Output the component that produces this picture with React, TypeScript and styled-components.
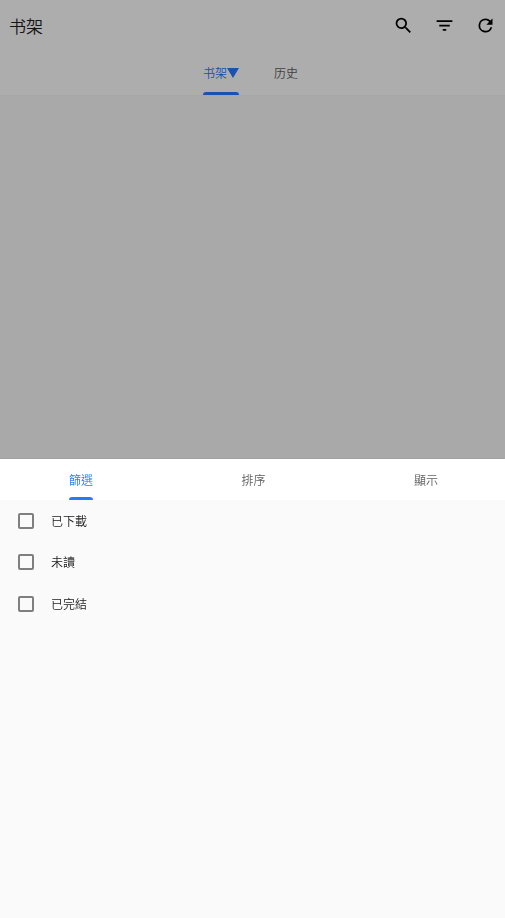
import React, { useState } from "react";
import styled, { createGlobalStyle } from "styled-components";

const GlobalStyle = createGlobalStyle`
  *, *::before, *::after { box-sizing: border-box; }
  body {
    margin: 0;
    background: #fafafa;
    color: #212121;
    font-family: "Noto Sans CJK SC", "Noto Sans CJK TC", sans-serif;
    font-size: 12px;
    font-weight: 350;
    line-height: 20px;
  }
  button, input { font: inherit; }
`;

const Page = styled.div`
  min-height: 100vh;
`;

const TopBar = styled.header`
  background: #ffffff;
  box-shadow: 0 1px 1px rgba(0, 0, 0, 0.02);
`;

const Toolbar = styled.div`
  display: flex;
  align-items: center;
  justify-content: space-between;
  height: 51px;
  padding: 0 9px;
`;

const Title = styled.h1`
  margin: 0;
  font-size: 17px;
  font-weight: inherit;
  line-height: 24px;
`;

const Actions = styled.div`
  display: flex;
  gap: 20px;
`;

const IconButton = styled.button`
  display: flex;
  padding: 0;
  border: 0;
  background: none;
  color: #000000;
`;

const Icon = styled.svg`
  width: 21px;
  height: 21px;
  fill: currentColor;
`;

const PageTabs = styled.nav`
  display: flex;
  justify-content: center;
  gap: 35px;
  height: 44px;
  padding-right: 4px;
`;

const SheetTabs = styled.nav`
  display: flex;
  justify-content: space-between;
  height: 41px;
  padding: 0 67px 0 69px;
  background: #ffffff;
`;

const Tab = styled.button<{ $active?: boolean }>`
  display: flex;
  flex-direction: column;
  padding: 0;
  border: 0;
  background: none;
  color: ${(p) => (p.$active ? "#2979ff" : "#616161")};

  &::after {
    content: "";
    align-self: stretch;
    height: 3px;
    border-radius: 3px 3px 0 0;
    background: ${(p) => (p.$active ? "#2979ff" : "transparent")};
  }
`;

const TabLabel = styled.span`
  display: flex;
  flex: 1;
  align-items: center;
  padding-top: 3px;
`;

const Triangle = styled.svg`
  width: 12px;
  height: 10px;
  fill: currentColor;
`;

const Scrim = styled.div`
  position: fixed;
  inset: 0;
  background: rgba(0, 0, 0, 0.32);
`;

const Sheet = styled.section`
  position: fixed;
  inset: 50% 0 0;
  background: #fafafa;
  font-family: "Noto Sans CJK TC", "Noto Sans CJK SC", sans-serif;
  box-shadow: 0 0 2px rgba(0, 0, 0, 0.15);
`;

const Option = styled.label`
  display: flex;
  align-items: center;
  gap: 17px;
  padding: 0 18px;
`;

const OptionList = styled.div`
  display: grid;
  grid-auto-rows: 1fr;
  height: 125px;
`;

const Checkbox = styled.input`
  appearance: none;
  width: 16px;
  height: 16px;
  margin: 0;
  border: 2px solid #7f7f7f;
  border-radius: 2px;

  &:checked {
    border-color: #2979ff;
    background: #2979ff;
  }
`;

const actions = [
  {
    label: "搜索",
    path: "M15.5 14h-.79l-.28-.27A6.47 6.47 0 0 0 16 9.5 6.5 6.5 0 1 0 9.5 16c1.61 0 3.09-.59 4.23-1.57l.27.28v.79l5 4.99L20.49 19l-4.99-5zm-6 0C7.01 14 5 11.99 5 9.5S7.01 5 9.5 5 14 7.01 14 9.5 11.99 14 9.5 14z",
  },
  { label: "筛选", path: "M10 18h4v-2h-4v2zM3 6v2h18V6H3zm3 7h12v-2H6v2z" },
  {
    label: "刷新",
    path: "M17.65 6.35A7.96 7.96 0 0 0 12 4a8 8 0 1 0 7.73 10h-2.08A6 6 0 1 1 12 6c1.66 0 3.14.69 4.22 1.78L13 11h7V4l-2.35 2.35z",
  },
];

const sheetTabs = ["篩選", "排序", "顯示"];
const options = ["已下載", "未讀", "已完結"];

export default function App() {
  const [activeTab, setActiveTab] = useState(0);
  return (
    <Page>
      <GlobalStyle />
      <TopBar>
        <Toolbar>
          <Title>书架</Title>
          <Actions>
            {actions.map((a) => (
              <IconButton key={a.label} aria-label={a.label}>
                <Icon viewBox="0 0 24 24">
                  <path d={a.path} />
                </Icon>
              </IconButton>
            ))}
          </Actions>
        </Toolbar>
        <PageTabs>
          <Tab $active>
            <TabLabel>
              书架
              <Triangle viewBox="0 0 12 10">
                <path d="M0 0h12L6 10z" />
              </Triangle>
            </TabLabel>
          </Tab>
          <Tab>
            <TabLabel>历史</TabLabel>
          </Tab>
        </PageTabs>
      </TopBar>
      <Scrim />
      <Sheet>
        <SheetTabs>
          {sheetTabs.map((label, i) => (
            <Tab key={label} $active={i === activeTab} onClick={() => setActiveTab(i)}>
              <TabLabel>{label}</TabLabel>
            </Tab>
          ))}
        </SheetTabs>
        <OptionList>
          {options.map((label) => (
            <Option key={label}>
              <Checkbox type="checkbox" />
              {label}
            </Option>
          ))}
        </OptionList>
      </Sheet>
    </Page>
  );
}
